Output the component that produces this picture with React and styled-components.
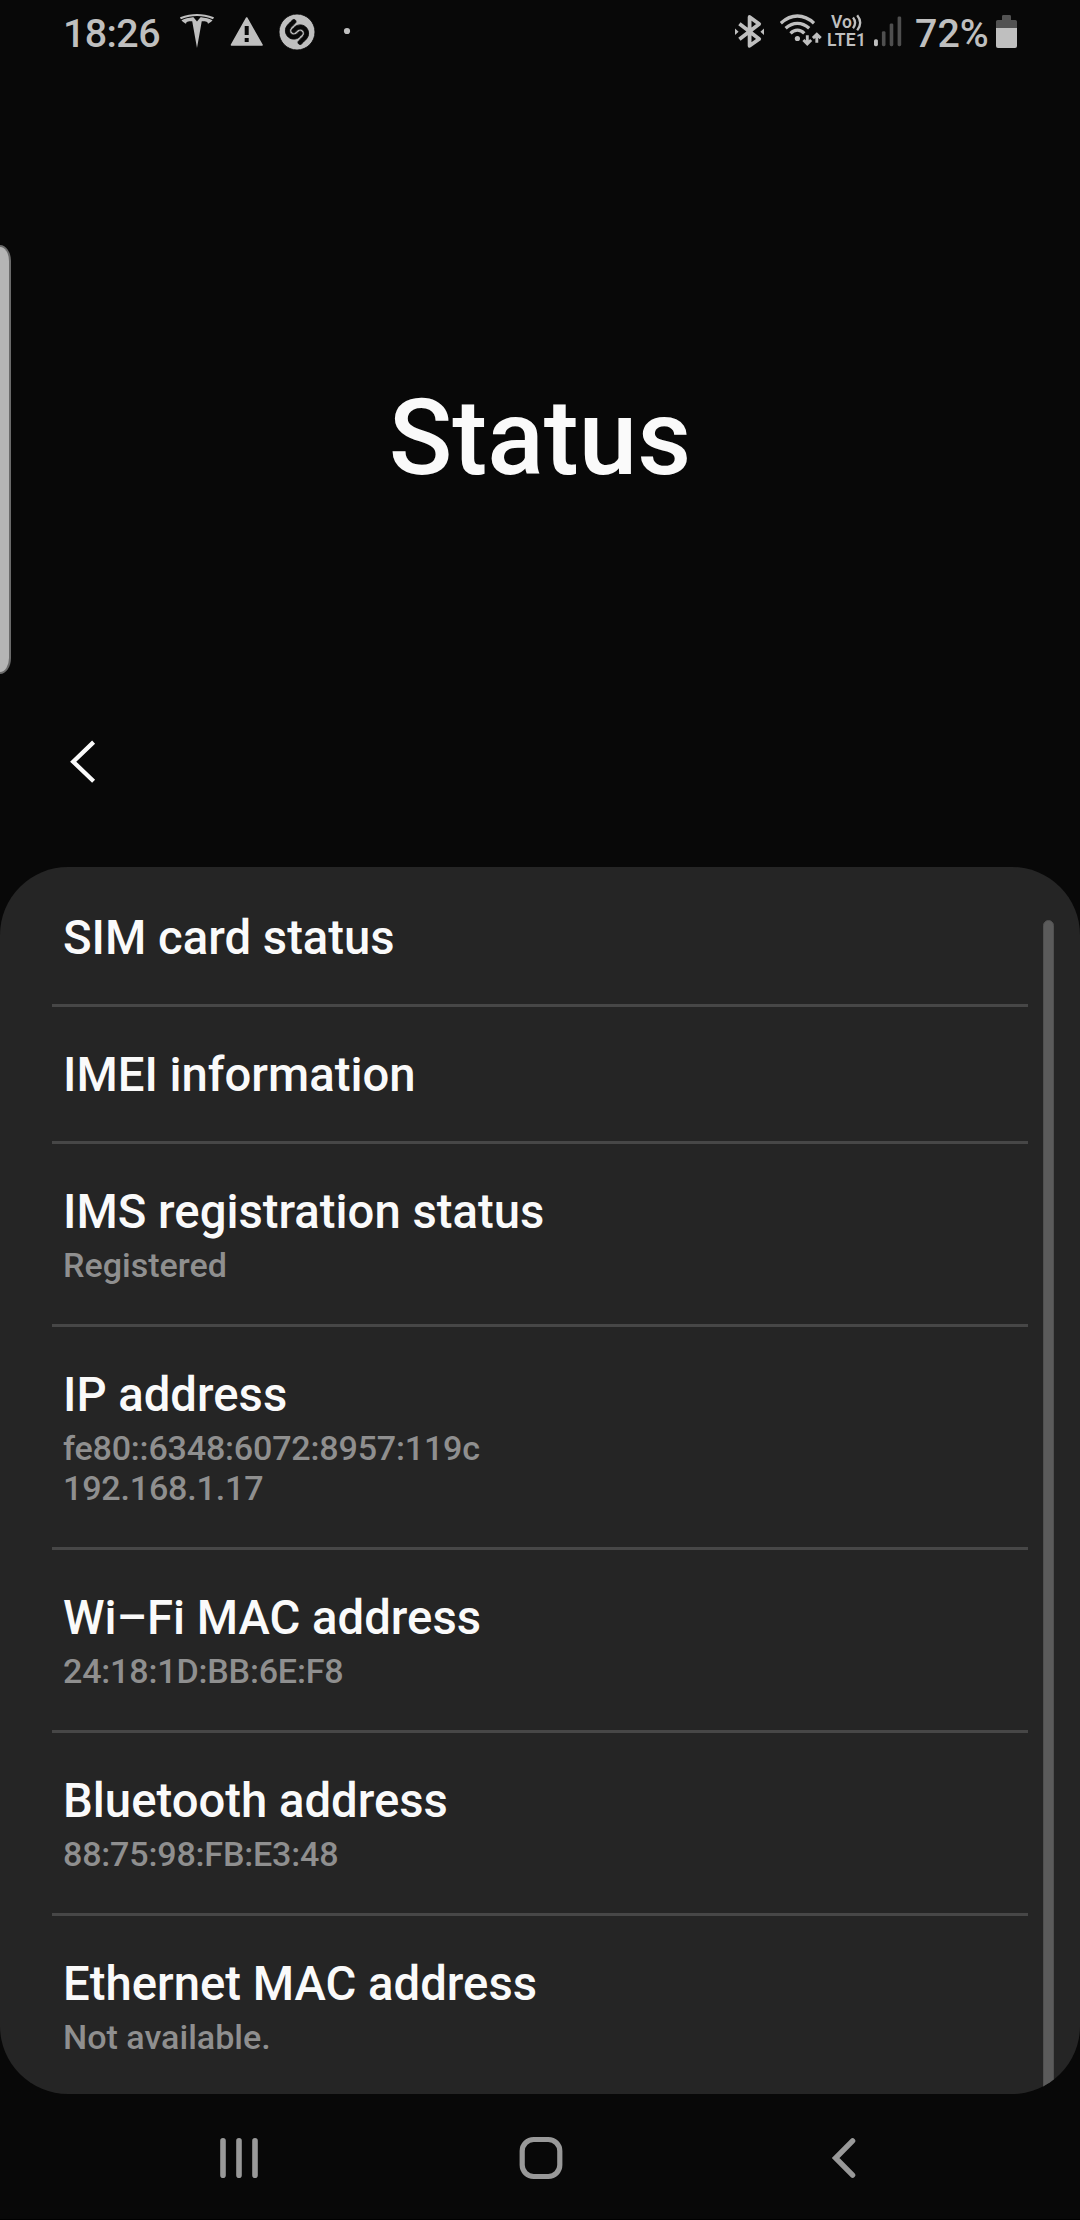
import React from "react";
import styled, { createGlobalStyle } from "styled-components";
import { SiShazam } from "react-icons/si";

const GlobalStyle = createGlobalStyle`
  *, *::before, *::after { box-sizing: border-box; }
  html, body { margin: 0; padding: 0; background: #080808; }
  svg { display: block; flex: none; }
`;

const Screen = styled.div`
  position: relative;
  display: flex;
  flex-direction: column;
  width: 1080px;
  height: 2220px;
  overflow: hidden;
  background: #080808;
  border-bottom: 1px solid #000;
  color: #fafafa;
  font-family: Roboto, "Liberation Sans", sans-serif;
  font-weight: 500;
`;

const StatusBar = styled.header`
  display: flex;
  justify-content: space-between;
  height: 63px;
  padding: 14px 63px 0 63px;
  color: #bfbfbf;
`;

const StatusGroup = styled.div`
  display: flex;
  align-items: flex-start;
  height: 36px;
`;

const StatusText = styled.span`
  width: ${(p) => p.$width}px;
  margin-left: ${(p) => p.$gap || 0}px;
  font-size: 39.4px;
  line-height: 40px;
  letter-spacing: ${(p) => p.$spacing || 0}px;
  white-space: nowrap;
`;

const IconSlot = styled.span`
  display: flex;
  margin-left: ${(p) => p.$gap}px;
`;

const ShazamIcon = styled(SiShazam)`
  width: 36px;
  height: 36px;
  overflow: visible;
  stroke: #080808;
  stroke-width: 0.6px;
`;

const Volte = styled.span`
  display: flex;
  flex-direction: column;
  width: 40px;
  margin-left: 5px;
  font-size: 17.5px;
  font-weight: 600;
  line-height: 17px;
  letter-spacing: 0.3px;
  white-space: nowrap;
`;

const VolteTop = styled.span`
  display: flex;
  height: 17.5px;
  padding-left: 4px;
  letter-spacing: 0;
`;

const EdgeHandle = styled.div`
  position: absolute;
  top: 245px;
  left: 0;
  width: 11px;
  height: 429px;
  background: #b5b5b5;
  border: 2px solid #6a6a6a;
  border-left: 0;
  border-radius: 0 11px 11px 0 / 0 16px 16px 0;
`;

const Hero = styled.section`
  display: flex;
  align-items: flex-end;
  justify-content: center;
  height: 437px;
`;

const PageTitle = styled.h1`
  margin: 0;
  font-size: 105px;
  font-weight: 500;
  line-height: 123px;
`;

const Toolbar = styled.div`
  display: flex;
  align-items: flex-end;
  height: 367px;
  padding: 0 68px 82px;
`;

const IconButton = styled.button`
  display: flex;
  padding: 0;
  border: 0;
  background: none;
  color: ${(p) => p.$color};
`;

const Card = styled.main`
  position: relative;
  flex: none;
  height: 1227px;
  overflow: hidden;
  background: #252525;
  border-radius: 68px;
`;

const Row = styled.div`
  display: flex;
  flex-direction: column;
  margin: 0 52px;
  padding: 40px 11px 38px;
  border-top: 3px solid #474747;

  &:first-child { border-top-color: transparent; }
`;

const RowTitle = styled.div`
  height: 56px;
  font-size: 47.25px;
  line-height: 56px;
  white-space: nowrap;
`;

const RowValue = styled.div`
  height: 40px;
  font-size: 34.1px;
  line-height: 40px;
  letter-spacing: ${(p) => (p.$numeric ? -0.2 : 0)}px;
  color: #8f8f8f;
  white-space: nowrap;
`;

const Values = styled.div`
  display: flex;
  flex-direction: column;
  padding: 5px 0 1px;
`;

const ScrollThumb = styled.div`
  position: absolute;
  top: 53px;
  right: 26px;
  bottom: -20px;
  width: 11px;
  background: #5b5b5b;
  border: 1px solid #505050;
  border-radius: 6px;
`;

const NavBar = styled.nav`
  display: grid;
  grid-template-columns: 305px 309px 32px;
  align-items: center;
  height: 125px;
  padding: 3px 0 0 214px;
`;

const TeslaIcon = () => (
  <svg width="34" height="34" viewBox="0 0 24 24" preserveAspectRatio="none" fill="currentColor">
    <path d="M12 5.362l2.475-3.026s4.245.09 8.471 2.054c-1.082 1.636-3.231 2.438-3.231 2.438-.146-1.439-1.154-1.79-4.354-1.79L12 24 8.619 5.034c-3.18 0-4.188.354-4.335 1.792 0 0-2.146-.795-3.229-2.43C5.28 2.431 9.525 2.34 9.525 2.34L12 5.362zm0-3.899c3.415-.03 7.326.528 11.328 2.28.535-.968.672-1.395.672-1.395C19.625.612 15.528.015 12 0 8.472.015 4.375.61 0 2.349c0 0 .195.525.672 1.396C4.674 1.989 8.585 1.435 12 1.46v.003z" />
  </svg>
);

const WarningIcon = () => (
  <svg width="34" height="36" viewBox="0 0 34 36">
    <path d="M16.7 4L32 31H1.5Z" fill="currentColor" stroke="currentColor" strokeWidth="1.6" strokeLinejoin="round" />
    <path d="M14.7 12h4v9h-4zM14.7 24h4v4h-4z" fill="#080808" />
  </svg>
);

const DotIcon = () => (
  <svg width="8" height="36" viewBox="0 0 8 36">
    <circle cx="4" cy="17" r="3.1" fill="currentColor" />
  </svg>
);

const BluetoothIcon = () => (
  <svg width="30" height="36" viewBox="0 0 30 36">
    <path
      d="M4.4 9.8L24.2 25L14.6 31.8V3L24.2 10L4.4 25.2"
      fill="none"
      stroke="currentColor"
      strokeWidth="3.8"
      strokeLinejoin="round"
    />
    <path d="M0 14.6L3.6 17.8L0 21ZM29 14.6L25.4 17.8L29 21Z" fill="currentColor" />
  </svg>
);

const WifiIcon = () => (
  <svg width="42" height="36" viewBox="0 0 42 36" fill="none" stroke="currentColor" strokeWidth="3.3">
    <path d="M0.8 9.2Q8.6 2 17.4 2T34 9.2" />
    <path d="M5.6 14.3Q11.1 9.3 17.4 9.3T29.2 14.3" />
    <path d="M10.5 19.3Q13.6 16.2 17.4 16.2T24.3 19.3" />
    <circle cx="17.4" cy="24.5" r="2.6" fill="currentColor" stroke="none" />
    <path d="M27.3 21.2V29.5M23.4 26L27.3 29.9L31.2 26M36.8 28.8V20.5M32.9 24.1L36.8 20.2L40.7 24.1" strokeWidth="2.9" />
  </svg>
);

const WavesIcon = () => (
  <svg width="12" height="18" viewBox="0 0 12 18" fill="none" stroke="currentColor" strokeWidth="2.3">
    <path d="M1 3.6Q5.2 8.7 1 14.2M5.2 1.2Q11.2 8.7 5.2 16.4" />
  </svg>
);

const SignalIcon = () => (
  <svg width="28" height="36" viewBox="0 0 28 36" fill="#4f4f4f">
    <rect x="0" y="25.2" width="3.9" height="7" rx="1.6" fill="currentColor" />
    <rect x="7.9" y="17.2" width="3.6" height="15" rx="1.4" />
    <rect x="15.7" y="9.4" width="3.6" height="22.8" rx="1.4" />
    <rect x="23.6" y="2.4" width="3.6" height="29.8" rx="1.4" />
  </svg>
);

const BatteryIcon = () => (
  <svg width="21" height="36" viewBox="0 0 21 36">
    <path d="M6 2.4Q6 1 7.4 1H13.6Q15 1 15 2.4V6H19.4Q21 6 21 7.6V14H0V7.6Q0 6 1.6 6H6Z" fill="#525252" />
    <path d="M0 14H21V32Q21 34 19 34H2Q0 34 0 32Z" fill="currentColor" />
  </svg>
);

const BackIcon = () => (
  <svg width="30" height="46" viewBox="0 0 30 46">
    <path d="M25.6 3.1L5.2 22.7L25.6 42.3" fill="none" stroke="currentColor" strokeWidth="4.3" />
  </svg>
);

const RecentsIcon = () => (
  <svg width="50" height="44" viewBox="0 0 50 44" stroke="currentColor" strokeWidth="5.6" strokeLinecap="round">
    <path d="M9 4.8V39.2M25 4.8V39.2M41 4.8V39.2" />
  </svg>
);

const HomeIcon = () => (
  <svg width="44" height="44" viewBox="0 0 44 44">
    <rect x="3.2" y="3.5" width="37.6" height="37" rx="11.5" fill="none" stroke="currentColor" strokeWidth="5.2" />
  </svg>
);

const NavBackIcon = () => (
  <svg width="32" height="44" viewBox="0 0 32 44">
    <path d="M24.6 4.8L7.6 22L24.6 39.2" fill="none" stroke="currentColor" strokeWidth="5.4" strokeLinecap="round" />
  </svg>
);

const entries = [
  { title: "SIM card status" },
  { title: "IMEI information" },
  { title: "IMS registration status", values: ["Registered"] },
  { title: "IP address", values: ["fe80::6348:6072:8957:119c", "192.168.1.17"], numeric: true },
  { title: "Wi–Fi MAC address", values: ["24:18:1D:BB:6E:F8"], numeric: true },
  { title: "Bluetooth address", values: ["88:75:98:FB:E3:48"], numeric: true },
  { title: "Ethernet MAC address", values: ["Not available."] },
];

export default function App() {
  return (
    <Screen>
      <GlobalStyle />
      <StatusBar>
        <StatusGroup>
          <StatusText $width={117} $spacing={-0.6}>18:26</StatusText>
          <TeslaIcon />
          <IconSlot $gap={16}><WarningIcon /></IconSlot>
          <IconSlot $gap={15}><ShazamIcon /></IconSlot>
          <IconSlot $gap={28}><DotIcon /></IconSlot>
        </StatusGroup>
        <StatusGroup>
          <BluetoothIcon />
          <IconSlot $gap={15}><WifiIcon /></IconSlot>
          <Volte>
            <VolteTop>Vo<WavesIcon /></VolteTop>
            <span>LTE1</span>
          </Volte>
          <IconSlot $gap={7}><SignalIcon /></IconSlot>
          <StatusText $width={75} $gap={13}>72%</StatusText>
          <IconSlot $gap={6}><BatteryIcon /></IconSlot>
        </StatusGroup>
      </StatusBar>
      <Hero><PageTitle>Status</PageTitle></Hero>
      <Toolbar>
        <IconButton $color="#fafafa" aria-label="Back"><BackIcon /></IconButton>
      </Toolbar>
      <Card>
        {entries.map(({ title, values, numeric }) => (
          <Row key={title}>
            <RowTitle>{title}</RowTitle>
            {values && (
              <Values>
                {values.map((v) => <RowValue key={v} $numeric={numeric}>{v}</RowValue>)}
              </Values>
            )}
          </Row>
        ))}
        <ScrollThumb />
      </Card>
      <NavBar>
        <IconButton $color="#999" aria-label="Recents"><RecentsIcon /></IconButton>
        <IconButton $color="#999" aria-label="Home"><HomeIcon /></IconButton>
        <IconButton $color="#999" aria-label="Back"><NavBackIcon /></IconButton>
      </NavBar>
      <EdgeHandle />
    </Screen>
  );
}
